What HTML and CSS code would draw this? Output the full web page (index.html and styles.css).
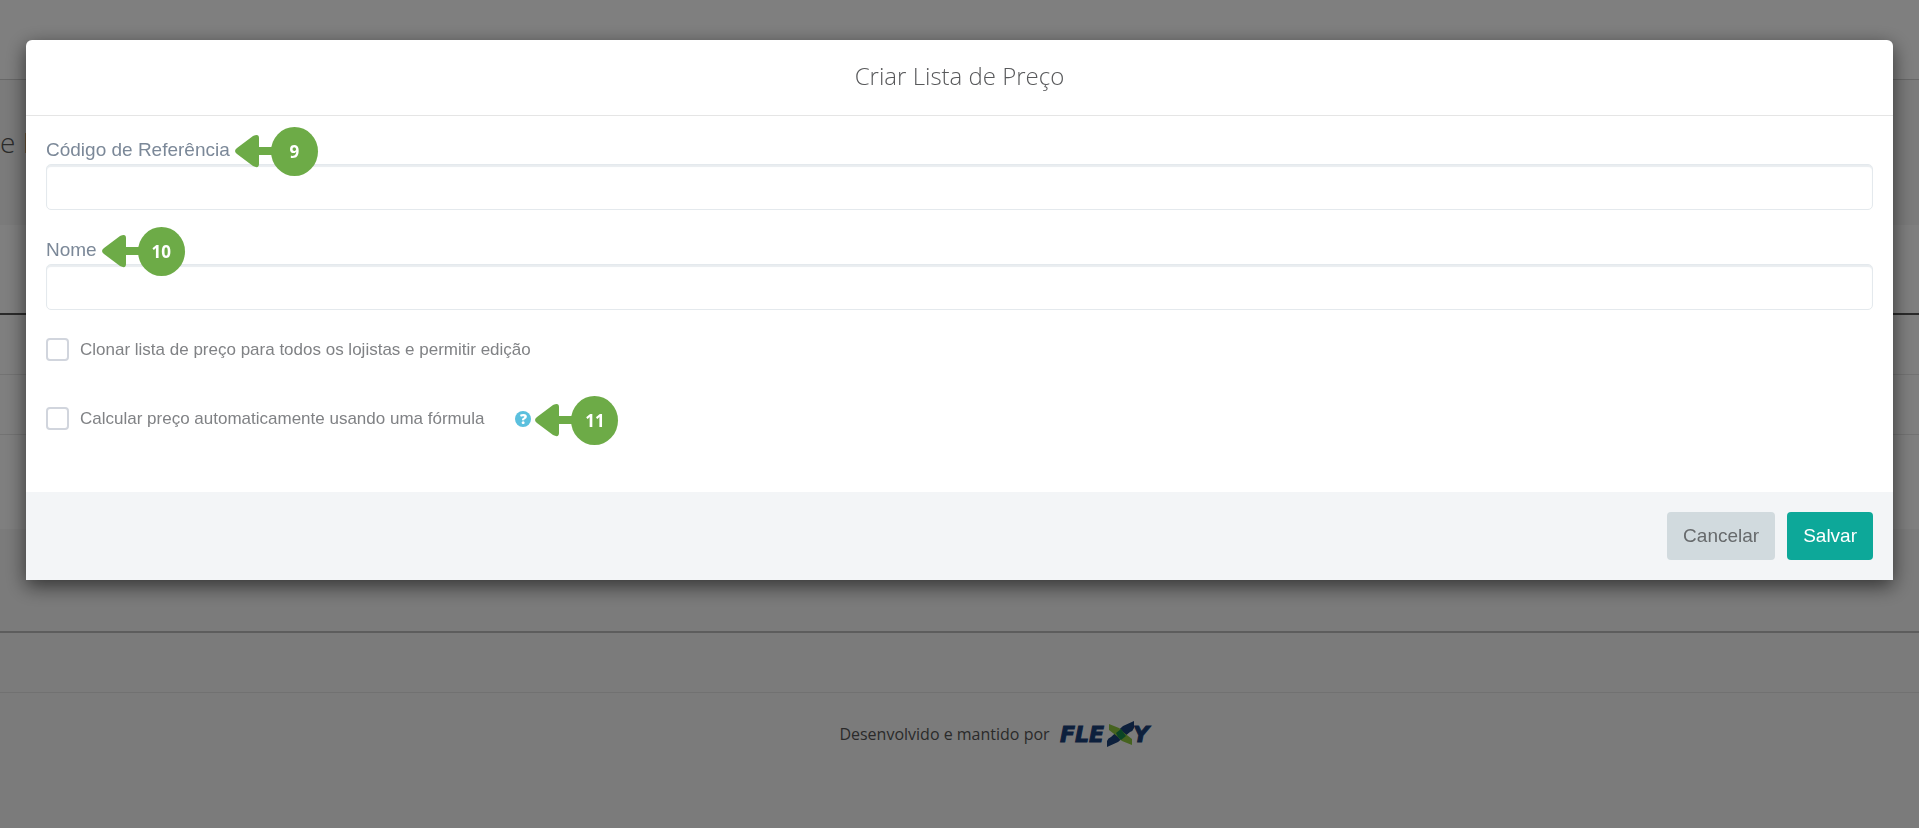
FILE: index.html
```html
<!DOCTYPE html>
<html lang="pt-BR">

<head>
    <meta charset="UTF-8">
    <meta name="viewport" content="width=device-width, initial-scale=1">
    <title>Criar Lista de Preço</title>
    <link rel="stylesheet" href="styles.css">
</head>

<body>
    <div class="page">
        <div class="topbar"></div>
        <div class="page-header">
            <div class="page-title">e P</div>
        </div>
        <div class="list">
            <div class="list-head"></div>
            <div class="list-row"></div>
            <div class="list-row"></div>
            <div class="list-end"></div>
        </div>
        <div class="page-space"></div>
        <div class="page-bottom"></div>
        <footer class="page-footer">
            <span>Desenvolvido e mantido por</span>
            <svg class="logo" width="96" height="28" viewBox="0 0 96 28" role="img" aria-label="Flexy">
                <g class="logo-text">
                    <text x="2" y="22">FLE</text>
                    <text x="75" y="22">Y</text>
                </g>
                <path fill="#1b4079" d="M49 27 V21 Q50 18 53 17 L65 6 L76 1 V8 Q75 11 72 12 L60 22 Z" />
                <path fill="#8cc63f" d="M51 4 L61 8 Q64 10 65 12 L74 19 V25 L64 21 Q61 19 60 17 L51 10 Z" />
                <path fill="#168a4a" d="M58 13 L63 9 Q64 10 65 12 L68 16 L63 20 L60 17 Z" />
            </svg>
        </footer>
    </div>

    <div class="backdrop">
        <form class="modal" role="dialog" aria-labelledby="modalTitle">
            <div class="modal-header">
                <h4 id="modalTitle">Criar Lista de Preço</h4>
            </div>
            <div class="modal-body">
                <div class="form-group">
                    <div class="label-line">
                        <label for="codigo">Código de Referência</label>
                        <span class="marker">
                            <svg class="arrow" width="40" height="34" viewBox="0 0 40 34">
                                <path d="M2 14 L18 2 Q24 -1 24 4 V13 H40 V21 H24 V30 Q24 35 18 32 L2 20 Q-2 17 2 14 Z" />
                            </svg>
                            <span class="marker-number">9</span>
                        </span>
                    </div>
                    <input type="text" id="codigo" class="form-control">
                </div>
                <div class="form-group">
                    <div class="label-line">
                        <label for="nome">Nome</label>
                        <span class="marker">
                            <svg class="arrow" width="40" height="34" viewBox="0 0 40 34">
                                <path d="M2 14 L18 2 Q24 -1 24 4 V13 H40 V21 H24 V30 Q24 35 18 32 L2 20 Q-2 17 2 14 Z" />
                            </svg>
                            <span class="marker-number">10</span>
                        </span>
                    </div>
                    <input type="text" id="nome" class="form-control">
                </div>
                <div class="check-group">
                    <input type="checkbox" id="clonar">
                    <label for="clonar">Clonar lista de preço para todos os lojistas e permitir edição</label>
                </div>
                <div class="check-group">
                    <input type="checkbox" id="calcular">
                    <label for="calcular">Calcular preço automaticamente usando uma fórmula</label>
                    <div class="help-wrap">
                        <button type="button" class="help" aria-label="Ajuda">?</button>
                        <span class="marker">
                            <svg class="arrow" width="40" height="34" viewBox="0 0 40 34">
                                <path d="M2 14 L18 2 Q24 -1 24 4 V13 H40 V21 H24 V30 Q24 35 18 32 L2 20 Q-2 17 2 14 Z" />
                            </svg>
                            <span class="marker-number">11</span>
                        </span>
                    </div>
                </div>
            </div>
            <div class="modal-footer">
                <button type="button" class="btn btn-default">Cancelar</button>
                <button type="submit" class="btn btn-success">Salvar</button>
            </div>
        </form>
    </div>
</body>

</html>
```

FILE: styles.css
```css
* {
    box-sizing: border-box;
}

body {
    margin: 0;
    background-color: #f7f7f7;
    font-family: "Liberation Sans", Arial, sans-serif;
    overflow: hidden;
}

/* page behind the modal */
.page {
    min-height: 100vh;
}

.topbar {
    height: 80px;
    background-color: #fff;
    border-bottom: 1px solid #d0d0d0;
}

.page-header {
    height: 145px;
    padding-top: 40px;
}

.page-title {
    font-family: "Open Sans", sans-serif;
    font-weight: 300;
    font-size: 28px;
    line-height: 44px;
    color: #555;
}

.list {
    background-color: #fff;
}

.list-head {
    height: 90px;
    border-bottom: 2px solid #555;
}

.list-row {
    height: 60px;
    border-bottom: 1px solid #e7e7e7;
}

.list-end {
    height: 94px;
}

.page-space {
    height: 104px;
    border-bottom: 2px solid #bbb;
}

.page-bottom {
    height: 60px;
    border-bottom: 1px solid #e2e2e2;
}

.page-footer {
    display: flex;
    justify-content: center;
    align-items: center;
    gap: 8px;
    padding-top: 27px;
    padding-left: 74px;
    font-family: "Open Sans", sans-serif;
    font-size: 16px;
    color: #555;
}

.logo-text {
    font-family: "DejaVu Sans", sans-serif;
    font-weight: 700;
    font-style: italic;
    font-size: 22px;
    fill: #1b4079;
    stroke: #1b4079;
}

/* modal */
.backdrop {
    position: fixed;
    inset: 0;
    padding: 40px 26px;
    background-color: rgba(0, 0, 0, 0.5);
}

.modal {
    background-color: #fff;
    border-radius: 6px 6px 0 0;
    box-shadow: 0 6px 20px rgba(0, 0, 0, 0.6);
}

.modal-header {
    padding: 18px 20px 22px;
    border-bottom: 1px solid #e5e5e5;
    text-align: center;
}

.modal-header h4 {
    margin: 0;
    font-family: "Open Sans", sans-serif;
    font-weight: 300;
    font-size: 24px;
    line-height: 35px;
    color: #58595b;
}

.modal-body {
    padding: 20px 20px 61px;
}

.form-group {
    margin-bottom: 26px;
}

.label-line {
    display: flex;
    align-items: center;
    gap: 5px;
    height: 28px;
    font-size: 19px;
    color: #7b8898;
}

.form-control {
    display: block;
    width: 100%;
    height: 46px;
    padding: 8px 16px;
    border: 1px solid #e4e9ed;
    border-radius: 5px;
    box-shadow: inset 0 2px 1px #e9edf0;
    font-size: 19px;
}

.check-group {
    display: flex;
    align-items: center;
    height: 26px;
    margin-bottom: 43px;
    font-size: 17px;
    color: #808285;
}

.check-group:last-child {
    margin-bottom: 0;
}

.check-group label {
    padding-top: 2px;
}

.check-group input {
    appearance: none;
    width: 23px;
    height: 23px;
    margin: 0 11px 0 0;
    border: 2px solid #d1d5dd;
    border-radius: 4px;
    background-color: #fff;
}

.help-wrap {
    display: flex;
    align-items: center;
    gap: 4px;
    padding-top: 2px;
    margin-left: 31px;
}

.help {
    width: 16px;
    height: 16px;
    padding: 0;
    border: none;
    border-radius: 50%;
    background-color: #5bc0de;
    color: #fff;
    font-family: "Open Sans", sans-serif;
    font-weight: 800;
    font-size: 14px;
    line-height: 16px;
}

/* numbered arrows */
.marker {
    display: flex;
    align-items: center;
    height: 0;
    margin-top: 2px;
}

.arrow {
    margin-right: -4px;
    fill: #6dab47;
}

.marker-number {
    width: 47px;
    height: 49px;
    border-radius: 50%;
    background-color: #6dab47;
    color: #fff;
    font-family: "Open Sans", sans-serif;
    font-weight: 700;
    font-size: 17px;
    line-height: 49px;
    text-align: center;
}

.modal-footer {
    display: flex;
    justify-content: flex-end;
    gap: 12px;
    padding: 20px;
    background-color: #f3f5f7;
}

.btn {
    height: 48px;
    padding: 0 16px;
    border: none;
    border-radius: 4px;
    font-family: inherit;
    font-size: 19px;
    cursor: pointer;
}

.btn-default {
    background-color: #d1dade;
    color: #676a6c;
}

.btn-success {
    background-color: #0da899;
    color: #fff;
}
```
